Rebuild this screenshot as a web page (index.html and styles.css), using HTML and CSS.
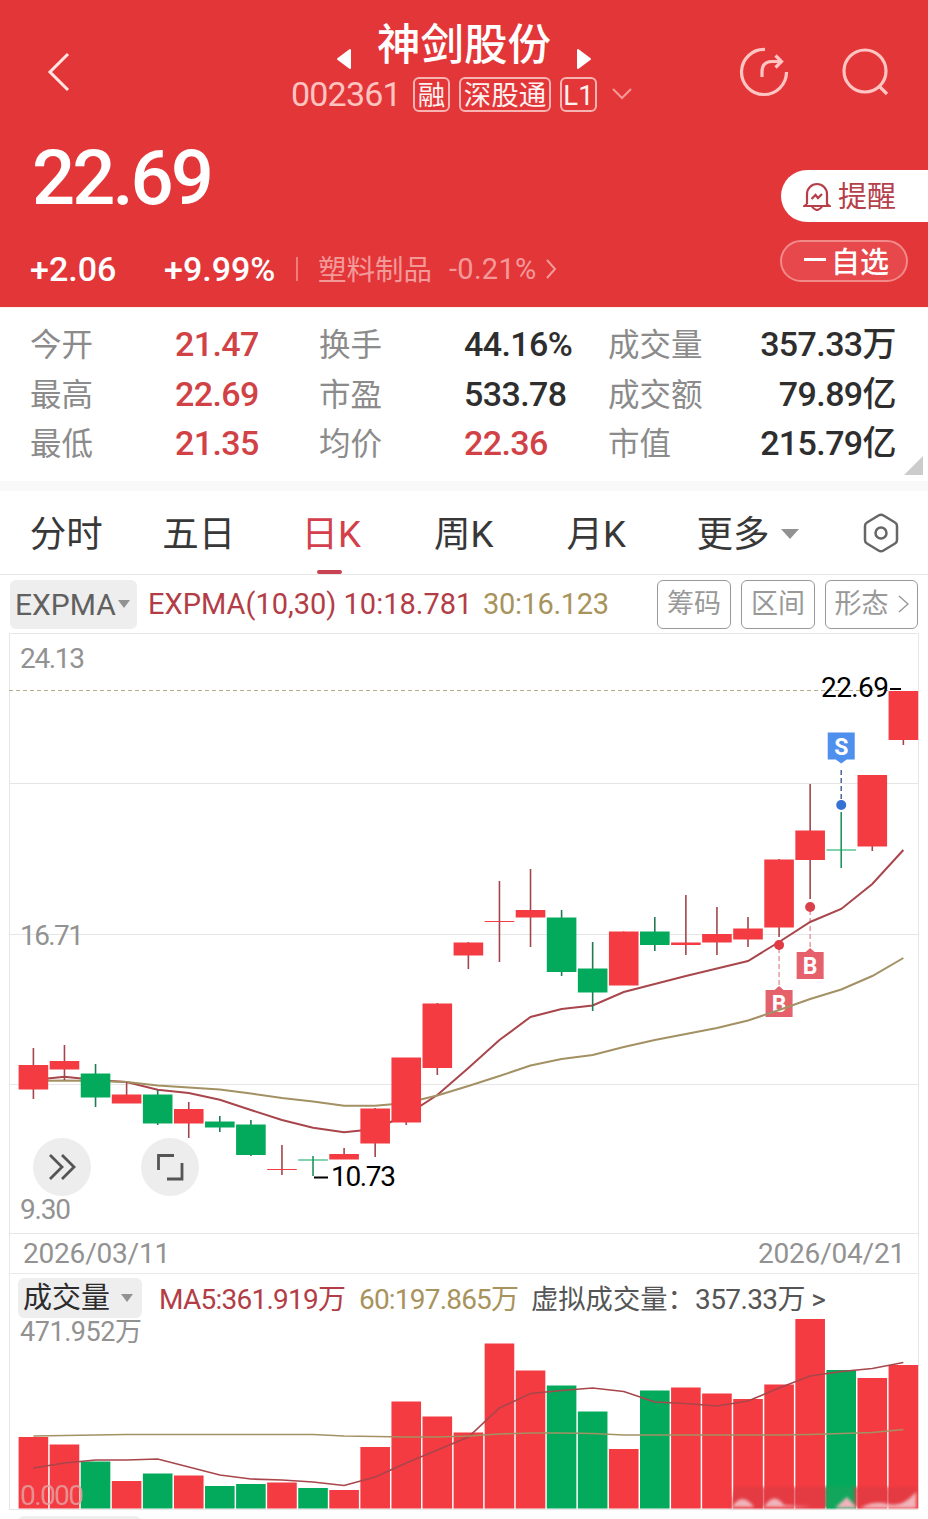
FILE: index.html
```html
<!DOCTYPE html>
<html lang="zh-CN">
<head>
    <meta charset="UTF-8">
    <meta name="viewport" content="width=device-width, initial-scale=1.0">
    <title>神剑股份 002361</title>
    <link rel="stylesheet" href="styles.css">
</head>
<body>
    <header class="header">
        <div class="topbar">
            <svg class="back" width="24" height="42" viewBox="0 0 24 42"><path d="M21 3L3 21L21 39"/></svg>
            <div class="stock">
                <div class="stock-name">
                    <svg width="16" height="22" viewBox="0 0 16 22"><path d="M14 2V20L2 11Z"/></svg>
                    <h1>神剑股份</h1>
                    <svg width="16" height="22" viewBox="0 0 16 22"><path d="M2 2V20L14 11Z"/></svg>
                </div>
                <div class="stock-code">
                    <span class="code">002361</span>
                    <span class="tag tag-rong">融</span>
                    <span class="tag tag-sgt">深股通</span>
                    <span class="tag tag-l1">L1</span>
                    <svg width="20" height="12" viewBox="0 0 20 12"><path d="M1 1L10 10L19 1"/></svg>
                </div>
            </div>
            <div class="actions">
                <svg width="50" height="50" viewBox="0 0 50 50"><path d="M26 2.5A22.5 22.5 0 1 0 47.5 25"/><path d="M23 30V25Q23 14.500 33 14.500H42M36.500 8.500L42.500 14.500L36.500 20.500"/></svg>
                <svg width="50" height="50" viewBox="0 0 50 50"><circle cx="24" cy="24" r="21"/><path d="M38.500 39.500L46 47"/></svg>
            </div>
        </div>
        <div class="price-row">
            <span class="price">22.69</span>
            <button class="remind">
                <svg width="28" height="30" viewBox="0 0 28 30"><path d="M4 23V13A10 10 0 0 1 24 13V23L26.500 25H1.500L4 23"/><path d="M8.500 25Q14 33 19.500 25"/><path d="M8.500 18L12.500 14L15 17L19 13"/></svg>
                <span>提醒</span>
            </button>
        </div>
        <div class="change-row">
            <span class="change">+2.06</span>
            <span class="percent">+9.99%</span>
            <span class="divider"></span>
            <span class="industry">塑料制品</span>
            <span class="industry-pct">-0.21%</span>
            <svg class="more" width="12" height="20" viewBox="0 0 12 20"><path d="M2 1L10 10L2 19"/></svg>
            <button class="watch"><i></i>自选</button>
        </div>
    </header>

    <section class="stats">
        <span>今开</span><b class="up">21.47</b><span>换手</span><b>44.16%</b><span>成交量</span><b class="right">357.33万</b>
        <span>最高</span><b class="up">22.69</b><span>市盈</span><b>533.78</b><span>成交额</span><b class="right">79.89亿</b>
        <span>最低</span><b class="up">21.35</b><span>均价</span><b class="up">22.36</b><span>市值</span><b class="right">215.79亿</b>
        <div class="corner"></div>
    </section>

    <nav class="tabs">
        <a>分时</a>
        <a>五日</a>
        <a class="active">日K</a>
        <a>周K</a>
        <a>月K</a>
        <a class="tab-more">更多<i class="caret"></i></a>
        <svg width="38" height="40" viewBox="0 0 38 40"><path d="M16.500 2.500Q19 1 21.500 2.500L33 9.500Q35 10.500 35 13V27Q35 29.500 33 30.500L21.500 37.500Q19 39 16.500 37.500L5 30.500Q3 29.500 3 27V13Q3 10.500 5 9.500Z"/><circle cx="19" cy="20" r="5.500"/></svg>
    </nav>

    <div class="indicator">
        <span class="picker">EXPMA<i class="caret small"></i></span>
        <span class="exp10">EXPMA(10,30) 10:18.781</span>
        <span class="exp30">30:16.123</span>
        <div class="tools">
            <span>筹码</span>
            <span>区间</span>
            <span>形态<svg width="11" height="18" viewBox="0 0 11 18"><path d="M1 1L10 9L1 17"/></svg></span>
        </div>
    </div>

    <svg id="kline" class="kline" width="928" height="601" viewBox="0 633 928 601"></svg>

    <div class="dates"><span>2026/03/11</span><span>2026/04/21</span></div>

    <div class="vol-head">
        <span class="picker vol-picker">成交量<i class="caret small"></i></span>
        <span class="ma5">MA5:361.919万</span>
        <span class="ma60">60:197.865万</span>
        <span class="virtual">虚拟成交量：</span>
        <span class="virtual-num">357.33万 &gt;</span>
    </div>
    <svg id="volume" class="volume" width="928" height="192" viewBox="0 1318 928 192"></svg>
    <div class="next-picker"></div>

    <script>
    const RED = '#f43b42', GREEN = '#04aa5c';
    const STEP = 31.07, FIRST = 33.4, BAR = 29.6;
    // high, body top, body bottom, low
    const candles = [
        [1048, 1065, 1089.5, 1099], [1045, 1061, 1069.5, 1080], [1064, 1073.5, 1097.5, 1107], [1082, 1094.5, 1103.5, 1103],
        [1090, 1094.5, 1123.5, 1125], [1102, 1109, 1123.5, 1138], [1116, 1121.5, 1127.5, 1132], [1120, 1124.5, 1155, 1156],
        [1145, 1169, 1170, 1175], [1156, 1159.5, 1160.5, 1176], [1148, 1154, 1159.5, 1159], [1108, 1108.5, 1143.5, 1157],
        [1058, 1057.5, 1122.5, 1125], [1003, 1003.5, 1068, 1075], [942, 942.5, 955.5, 969], [881, 921, 922, 962],
        [869, 910, 917.5, 947], [910, 917.5, 972, 976], [942, 968.5, 992.5, 1011], [931.5, 931.5, 985.5, 985],
        [917, 931.5, 945, 951], [895, 942.5, 945, 955], [907, 934, 942.5, 955], [917, 928.5, 939.5, 947],
        [859, 859.5, 927.5, 937], [784, 830.5, 860, 899], [812, 849.5, 850.5, 868], [775, 775, 846.5, 851], [691, 691, 740, 745]
    ];
    const green = [2, 4, 6, 7, 9, 17, 18, 20, 26];
    const exp10 = [1080, 1076.7, 1080, 1082, 1089.7, 1093, 1099.7, 1110, 1120, 1127.7, 1132.3, 1129, 1115, 1095, 1068, 1040,
        1017, 1009, 1005.5, 992, 984, 976, 968.5, 961, 942, 922, 909, 884, 850];
    const exp30 = [1081, 1080.5, 1081, 1082, 1085.5, 1087.5, 1089.5, 1093.5, 1098, 1101.5, 1105.8, 1105.8, 1103, 1095.5, 1086, 1076,
        1065.5, 1059, 1055, 1047, 1040, 1034, 1028, 1020.5, 1010, 999, 989.5, 976, 958];
    const volTops = [1437, 1444.5, 1461.5, 1481, 1473.5, 1475.5, 1486, 1484, 1482.5, 1488, 1490, 1447, 1401.5, 1416.5, 1432.5,
        1343.5, 1370.5, 1385.5, 1411.5, 1449, 1390.5, 1387.5, 1393.5, 1399, 1384.5, 1319, 1370, 1378, 1365];
    const ma5 = [1468, 1463, 1460, 1460, 1459, 1467, 1475, 1479, 1480, 1482, 1485.5, 1477, 1463, 1450, 1437, 1408, 1393.5,
        1390.5, 1388, 1391.5, 1402, 1403.5, 1406, 1401, 1388, 1376, 1371.5, 1368.5, 1362.5];
    const ma60 = [1436, 1435.5, 1435, 1434.5, 1434.5, 1434.5, 1434.5, 1434.5, 1434.5, 1434.5, 1436, 1436.5, 1437, 1437, 1436, 1434,
        1433, 1433, 1433.5, 1435, 1435, 1435, 1435, 1435, 1435, 1434.5, 1433.5, 1432.5, 1429.5];

    const x = i => FIRST + i * STEP;
    const color = i => green.includes(i) ? GREEN : RED;
    const line = (data, cls) => `<polyline class="${cls}" points="${data.map((y, i) => x(i) + ',' + y).join(' ')}"/>`;
    const label = (tx, y, w, text, cls) => `<text class="${cls || 'axis'}" x="${tx}" y="${y}" textLength="${w}">${text}</text>`;
    const buy = (i, dot, top) => `<path class="buy-dash" d="M${x(i)} ${dot}V${top}"/>
        <path class="buy" d="M${x(i) - 13.5} ${top + 3}h9l4.500 -4l4.500 4h9v27h-27z"/>
        <text class="mark" x="${x(i)}" y="${top + 24.5}">B</text>`;

    function drawKline() {
        let out = '<path class="grid" d="M9 633.500H918M9 783.500H918M9 934.500H918M9 1084.500H918M9 1233.500H918M9.500 633V1234M918.500 633V1234"/>';
        out += '<path class="last" d="M9 690.500H889"/>';
        out += buy(24, 948, 987) + buy(25, 910, 949);
        out += line(exp10, 'line-red') + line(exp30, 'line-gold');
        candles.forEach((c, i) => {
            const stick = i === 26 || i === 9 ? '#23905c' : green.includes(i) ? '#227a52' : '#a2454e';
            out += `<path d="M${x(i)} ${c[0]}V${c[3]}" stroke="${stick}" stroke-width="1.6"/>`;
            out += `<rect x="${x(i) - BAR / 2}" y="${c[1]}" width="${BAR}" height="${c[2] - c[1]}" fill="${color(i)}"/>`;
        });
        out += `<circle cx="${x(24)}" cy="945" r="5" fill="#e03b45"/><circle cx="${x(25)}" cy="907" r="5" fill="#d9404a"/>`;
        out += `<path class="sell-dash" d="M${x(26)} 770V800"/><circle cx="${x(26)}" cy="805" r="5" fill="#3572d4"/>`;
        out += `<path class="sell" d="M${x(26) - 13.5} 732.500h27v27h-8l-5.500 4l-5.500 -4h-8z"/><text class="mark" x="${x(26)}" y="755">S</text>`;
        out += label(20, 668, 65, '24.13') + label(20, 945, 64, '16.71') + label(20, 1219, 51, '9.30');
        out += label(821, 697, 68, '22.69', 'peak') + '<path class="tick" d="M890 689H901M314 1177.500H328"/>';
        out += label(331, 1186, 65, '10.73', 'peak');
        out += '<circle class="round" cx="62" cy="1167" r="29"/><path class="glyph" d="M50 1155L62 1167L50 1179M62 1155L74 1167L62 1179"/>';
        out += '<circle class="round" cx="170" cy="1167" r="29"/><path class="glyph" d="M158.500 1170V1155.500H174M182 1163V1179H167"/>';
        document.getElementById('kline').innerHTML = out;
    }

    function drawVolume() {
        let out = '<path class="grid" d="M9.500 1318V1509M9 1509.500H918M918.500 1318V1509"/>';
        volTops.forEach((y, i) => {
            out += `<rect x="${x(i) - BAR / 2}" y="${y}" width="${BAR}" height="${1508.5 - y}" fill="${color(i)}"/>`;
        });
        out += line(ma5, 'line-red') + line(ma60, 'line-gold');
        out += label(20, 1341, 122, '471.952万', 'axis vol-max') + label(20, 1504.5, 64, '0.000', 'axis zero');
        out += `<g class="smear">
            <path d="M735 1487H916V1508H730Z" fill="#dd3b43" opacity=".7"/>
            <path d="M826 1486h28v22h-28z" fill="#12a65c"/>
            <path d="M732 1507q10 -16 22 0zM764 1507q10 -16 20 -2l28 2zM835 1508l12 -11l10 11zM860 1508q14 -8 28 -4t28 -12v16z" fill="#f0b4ba"/></g>`;
        document.getElementById('volume').innerHTML = out;
    }

    drawKline();
    drawVolume();
    </script>
</body>
</html>
```

FILE: styles.css
```css
* { box-sizing: border-box; }
body { margin: 0; width: 928px; height: 1519px; overflow: hidden; background: #fff; color: #333; font-family: Roboto, "Noto Sans CJK SC", sans-serif; }
svg { display: block; fill: none; flex: none; }
button { font-family: inherit; padding: 0; }

.header { height: 307px; background: #e33639; color: #fff; }
.topbar { display: flex; height: 124px; }
.back { margin: 51px 0 0 47px; stroke: #ffe6e3; stroke-width: 3; }
.stock { width: 350px; margin-left: 220px; padding-top: 17px; }
.stock-name { display: flex; justify-content: center; gap: 25px; height: 54px; width: 346px; }
.stock-name h1 { margin: 2px 0 0; font-size: 43.500px; line-height: 54px; font-weight: 500; white-space: nowrap; }
.stock-name svg { margin-top: 31px; fill: #fff; stroke: #fff; stroke-width: 2; stroke-linejoin: round; }
.stock-code { display: flex; align-items: center; height: 46px; }
.code { width: 122px; font-size: 34px; letter-spacing: -0.8px; color: #ffc3c0; }
.tag { height: 35px; border: 2px solid #f7b4b2; border-radius: 6px; font-size: 27.500px; line-height: 33px; text-align: center; color: #fff1ef; margin-right: 9px; white-space: nowrap; }
.tag-rong { width: 37px; }
.tag-sgt { width: 92px; }
.tag-l1 { width: 37px; margin-right: 15px; }
.stock-code svg { stroke: #f49a98; stroke-width: 2; }
.actions { display: flex; gap: 52px; margin: 47px 0 0 98px; stroke: #ffc5c2; stroke-width: 3.200; }

.price-row { display: flex; justify-content: space-between; height: 107px; padding-left: 32px; }
.price { margin-top: 8px; font-size: 76px; line-height: 92px; font-weight: 500; letter-spacing: -3px; }
.remind { display: flex; align-items: center; gap: 7px; width: 147px; height: 52px; margin-top: 46px; padding-left: 22px; border: 0; border-radius: 26px 0 0 26px; background: #fff; color: #b5404a; font-size: 29px; white-space: nowrap; }
.remind span { margin-top: -5px; }
.remind svg { stroke: #b5404a; stroke-width: 2.200; }

.change-row { display: flex; align-items: center; height: 76px; padding: 0 20px 0 30px; white-space: nowrap; }
.change-row span { flex: none; }
.change { width: 134px; font-size: 34px; font-weight: 500; }
.percent { width: 132px; font-size: 34px; font-weight: 500; }
.change-row .divider { width: 2px; height: 24px; background: #ee7d7e; }
.change-row .industry { width: 151px; padding-left: 20px; margin-top: -3px; font-size: 28.500px; color: #f39a99; }
.industry-pct { width: 96px; font-size: 29px; letter-spacing: 0.300px; color: #f39a99; }
.more { stroke: #f39a99; stroke-width: 2; }
.watch { display: flex; align-items: center; gap: 5px; width: 128px; height: 42px; margin: -16px 0 0 auto; padding: 0 0 3px 22px; border: 2px solid #f28a8a; border-radius: 21px; background: #e7484b; color: #fff; font-size: 29px; font-weight: 500; white-space: nowrap; }
.watch i { width: 22px; height: 3px; background: #fff; flex: none; }

.stats { position: relative; display: grid; grid-template-columns: 145px 144px 145px 144px 1fr 168px; grid-template-rows: repeat(3, 49.600px); height: 174px; padding: 12px 32px 0 30px; border-top: 1px solid #fff1f0; font-size: 31.500px; line-height: 51px; color: #8b8b8b; white-space: nowrap; }
.stats b { font-size: 34px; line-height: 49px; font-weight: 500; letter-spacing: -0.600px; color: #2e2e2e; }
.stats .up { color: #d14246; }
.stats .right { text-align: right; }
.corner { position: absolute; right: 5px; bottom: 6px; border-left: 19px solid transparent; border-bottom: 19px solid #ccc; }

.tabs { display: flex; align-items: center; height: 94px; border-top: 10px solid #f9f9f9; border-bottom: 1px solid #e8e8e8; font-size: 36.500px; color: #383838; }
.tabs a { position: relative; width: 132.500px; height: 83px; line-height: 87px; text-align: center; }
.tabs .active { color: #d33f4a; }
.tabs .active::after { content: ""; position: absolute; left: 52px; bottom: 0; width: 25px; height: 4px; border-radius: 2px; background: #c94251; }
.tabs .tab-more { display: flex; align-items: center; width: 199px; padding: 3px 0 0 34px; }
.tabs svg { stroke: #666; stroke-width: 2.500; }
.caret { border: 9px solid transparent; border-top: 10px solid #929292; border-bottom: 0; margin-left: 11px; }
.caret.small { border-width: 8px 6.500px 0; margin-left: 2px; }

.indicator { display: flex; align-items: center; height: 58px; padding: 0 10px; font-size: 29px; white-space: nowrap; }
.indicator > span, .vol-head > span { flex: none; }
.picker { display: flex; align-items: center; width: 127px; height: 49px; padding-left: 5px; border-radius: 6px; background: #eee; color: #606060; }
.indicator .picker { font-size: 30px; }
.exp10 { width: 334px; padding-left: 11px; color: #b33d46; }
.exp30 { padding-left: 2px; color: #a8935c; margin-left: 10px; letter-spacing: -0.350px; }
.tools { display: flex; gap: 10px; margin-left: auto; font-size: 27px; line-height: 40px; color: #999; }
.tools span { display: flex; align-items: center; justify-content: center; gap: 9px; width: 74px; height: 49px; padding-bottom: 1px; border: 1.500px solid #999; border-radius: 6px; }
.tools span:last-child { width: 93px; }
.tools svg { stroke: #999; stroke-width: 1.500; }

.kline, .volume { font-size: 28px; }
.grid { stroke: #e6e6e6; stroke-width: 1; }
.last { stroke: #b5ad8c; stroke-width: 1.200; stroke-dasharray: 4 3; }
.line-red { stroke: #a8464b; stroke-width: 2; }
.line-gold { stroke: #a39164; stroke-width: 2; }
.axis { fill: #929292; }
.vol-max { font-size: 27px; }
.zero { fill: #e3a0a0; opacity: .85; }
.peak { fill: #000; }
.tick { stroke: #000; stroke-width: 2; }
.buy { fill: #e5616c; }
.sell { fill: #4f8fee; }
.buy-dash { stroke: #e89aa3; stroke-width: 1.500; stroke-dasharray: 5 3; }
.sell-dash { stroke: #45679a; stroke-width: 1.500; stroke-dasharray: 5 3; }
.mark { fill: #fff; font-size: 23px; font-weight: 700; text-anchor: middle; }
.round { fill: #ededed; }
.glyph { stroke: #555; stroke-width: 2.800; }
.smear { filter: blur(1.500px); }
.volume { overflow: visible; }
.volume .line-red, .volume .line-gold { stroke-width: 1.600; }

.dates { display: flex; justify-content: space-between; align-items: center; width: 910px; height: 40px; margin-left: 9px; padding: 0 13px; border: solid #e9e9e9; border-width: 0 1px 1.500px; font-size: 28px; letter-spacing: -0.200px; color: #929292; }
.vol-head { display: flex; align-items: center; width: 910px; height: 44px; margin-left: 9px; padding-left: 8px; border: solid #e9e9e9; border-width: 0 1px; font-size: 28px; line-height: 40px; white-space: nowrap; }
.vol-head > span { padding-top: 7px; }
.vol-head .vol-picker { width: 124px; height: 40px; margin-top: 3px; padding-top: 0; font-size: 29px; color: #2c2c2c; }
.vol-picker .caret { margin-left: 11px; }
.vol-head .ma5 { width: 217px; padding-left: 17px; letter-spacing: -0.750px; color: #b33d46; }
.vol-head .ma60 { width: 172px; letter-spacing: -0.800px; padding-left: 0; color: #a8935c; }
.vol-head .virtual { width: 164px; font-size: 27.300px; color: #555; }
.virtual-num { letter-spacing: -0.600px; color: #555; }
.next-picker { width: 123px; height: 6px; margin: 6px 0 0 18px; border-radius: 6px 6px 0 0; background: #eee; }
```
